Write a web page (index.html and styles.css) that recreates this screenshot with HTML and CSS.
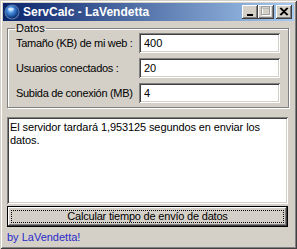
FILE: index.html
```html
<!DOCTYPE html>
<html lang="es">
<head>
<meta charset="utf-8">
<title>ServCalc - LaVendetta</title>
<link rel="stylesheet" href="styles.css">
</head>
<body>
<div class="window">
  <div class="titlebar">
    <svg class="appicon" width="16" height="16" viewBox="0 0 16 16">
      <defs>
        <radialGradient id="g" cx="0.4" cy="0.35" r="0.7">
          <stop offset="0" stop-color="#bfe3ff"/>
          <stop offset="0.35" stop-color="#4a8ee0"/>
          <stop offset="0.8" stop-color="#12408a"/>
          <stop offset="1" stop-color="#0a2050"/>
        </radialGradient>
      </defs>
      <circle cx="8" cy="8" r="7.5" fill="#5a7fb0"/>
      <circle cx="8" cy="8" r="6.5" fill="url(#g)"/>
      <ellipse cx="7" cy="5" rx="3" ry="1.6" fill="#e8f6ff" opacity="0.7"/>
    </svg>
    <span class="title">ServCalc - LaVendetta</span>
    <div class="controls">
      <span class="cbtn"><svg width="14" height="12" viewBox="0 0 14 12"><rect x="4" y="8" width="6" height="2" fill="#000"/></svg></span>
      <span class="cbtn disabled"><svg width="14" height="12" viewBox="0 0 14 12"><rect x="3.5" y="1.5" width="8" height="8" fill="none" stroke="#fff"/><rect x="2.5" y="0.5" width="8" height="8" fill="none" stroke="#a0a0a0"/><rect x="2.5" y="1.5" width="8" height="1" fill="#a0a0a0"/></svg></span>
      <span class="cbtn close"><svg width="14" height="12" viewBox="0 0 14 12"><path d="M3 2 L10 9 M4 2 L11 9 M10 2 L3 9 M11 2 L4 9" stroke="#000" stroke-width="1.1"/></svg></span>
    </div>
  </div>
  <div class="client">
    <fieldset class="group">
      <legend>Datos</legend>
      <div class="row"><label>Tamaño (KB) de mi web :</label><div class="field">400</div></div>
      <div class="row"><label>Usuarios conectados :</label><div class="field">20</div></div>
      <div class="row"><label>Subida de conexión (MB)</label><div class="field">4</div></div>
    </fieldset>
    <div class="output">El servidor tardará 1,953125 segundos en enviar los datos.</div>
    <div class="calc"><span class="focus">Calcular tiempo de envío de datos</span></div>
    <div class="by">by LaVendetta!</div>
  </div>
</div>
</body>
</html>
```
FILE: styles.css
```css
* { box-sizing: border-box; }
html, body { margin: 0; padding: 0; background: #d4d0c8; }
body {
  font-family: "Liberation Sans", Arial, sans-serif;
  font-size: 11px;
  color: #000;
}
.window {
  width: 297px;
  height: 249px;
  padding: 3px;
  background: #d4d0c8;
  box-shadow: inset 1px 1px #d4d0c8, inset -1px -1px #404040, inset 2px 2px #fff, inset -2px -2px #808080;
  display: flex;
  flex-direction: column;
}
.titlebar {
  height: 18px;
  background: linear-gradient(to right, #0a246a, #a6caf0);
  display: flex;
  align-items: center;
  padding: 0 2px 0 1px;
}
.appicon { flex: none; }
.title {
  margin-left: 3px;
  color: #fff;
  font-weight: bold;
  font-size: 12px;
  white-space: nowrap;
}
.controls {
  margin-left: auto;
  display: flex;
}
.cbtn {
  width: 16px;
  height: 14px;
  background: #d4d0c8;
  box-shadow: inset -1px -1px #404040, inset 1px 1px #fff, inset -2px -2px #808080, inset 2px 2px #d4d0c8;
  display: flex;
  align-items: center;
  justify-content: center;
}
.cbtn.close { margin-left: 2px; }
.client {
  padding: 2px 5px 0 4px;
  display: flex;
  flex-direction: column;
}
.group {
  margin: 0;
  padding: 0 8px 4px 8px;
  border: 1px solid #808080;
  box-shadow: inset 1px 1px #fff, 1px 1px #fff;
  width: 281px;
  display: flex;
  flex-direction: column;
  gap: 5px;
}
.group legend {
  padding: 0 1px;
  margin-left: -1px;
  line-height: 10px;
  height: 10px;
}
.row {
  display: flex;
  align-items: center;
  height: 20px;
}
.row label {
  width: 123px;
  flex: none;
  white-space: nowrap;
  letter-spacing: -0.3px;
}
.field {
  width: 141px;
  height: 20px;
  background: #fff;
  box-shadow: inset 1px 1px #808080, inset -1px -1px #fff, inset 2px 2px #404040, inset -2px -2px #d4d0c8;
  padding: 3px 5px;
  line-height: 14px;
}
.output {
  margin-top: 9px;
  width: 281px;
  height: 87px;
  background: #fff;
  box-shadow: inset 1px 1px #808080, inset -1px -1px #fff, inset 2px 2px #404040, inset -2px -2px #d4d0c8;
  padding: 4px 10px 0 3px;
  line-height: 13px;
  letter-spacing: -0.1px;
}
.calc {
  margin-top: 2px;
  width: 281px;
  height: 21px;
  border: 1px solid #000;
  background: #d4d0c8;
  box-shadow: inset -1px -1px #404040, inset 1px 1px #fff, inset -2px -2px #808080;
  padding: 3px;
  display: flex;
}
.calc .focus {
  flex: 1;
  border: 1px dotted #000;
  text-align: center;
  line-height: 11px;
  letter-spacing: -0.2px;
}
.by {
  margin-top: 4px;
  color: #2a2ac8;
  font-size: 11px;
  line-height: 13px;
}
```
